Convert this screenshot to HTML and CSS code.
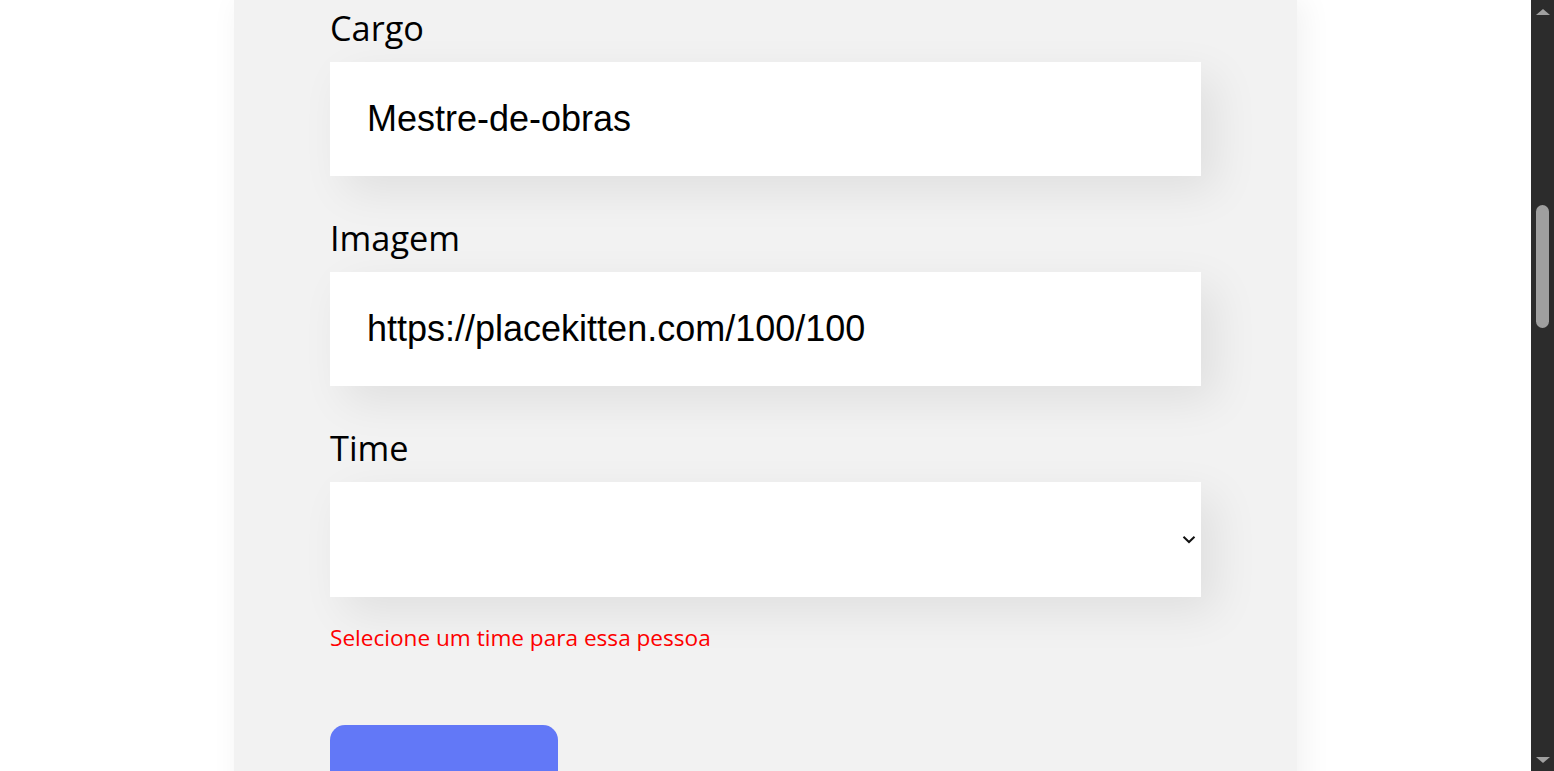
FILE: index.html
```html
<!DOCTYPE html>
<html lang="pt-BR">
<head>
<meta charset="utf-8">
<title>Organo</title>
<link rel="stylesheet" href="styles.css">
</head>
<body>
<div class="screen">
  <main class="page">
    <section class="form-panel">
      <form class="form">
        <div class="field">
          <label class="field-label" for="cargo">Cargo</label>
          <input class="field-input" id="cargo" type="text" value="Mestre-de-obras">
        </div>
        <div class="field">
          <label class="field-label" for="imagem">Imagem</label>
          <input class="field-input" id="imagem" type="text" value="https://placekitten.com/100/100">
        </div>
        <div class="field">
          <label class="field-label" for="time">Time</label>
          <div class="select-wrap">
            <select class="field-select" id="time"><option></option></select>
            <svg class="chevron" width="14" height="9" viewBox="0 0 14 9"><path d="M1.5 1.8 L7 7 L12.5 1.8" fill="none" stroke="#111" stroke-width="2"/></svg>
          </div>
          <p class="field-error">Selecione um time para essa pessoa</p>
        </div>
        <button class="submit" type="button"></button>
      </form>
    </section>
  </main>
  <aside class="scrollbar">
    <div class="sb-arrow sb-up"></div>
    <div class="sb-track"><div class="sb-thumb"></div></div>
    <div class="sb-arrow sb-down"></div>
  </aside>
</div>
</body>
</html>
```
FILE: styles.css
```css
* { box-sizing: border-box; }
html, body { margin: 0; padding: 0; background: #fff; overflow: hidden; }
body { font-family: "Open Sans", "Noto Sans", sans-serif; }

.screen { display: flex; width: 1554px; height: 771px; }
.page { flex: 1; height: 771px; overflow: hidden; background: #fff; }

.form-panel {
  width: 1063px;
  min-height: 900px;
  margin: 0 auto;
  background: #f2f2f2;
  padding: 5px 96px 0 96px;
  box-shadow: 6px 0 30px rgba(0, 0, 0, 0.06);
}

.form { display: flex; flex-direction: column; }

.field { margin-bottom: 39px; }

.field-label {
  display: block;
  font-size: 34.3px;
  line-height: 45px;
  color: #000;
  margin-bottom: 12px;
}

.field-input, .field-select {
  display: block;
  width: 100%;
  height: 114px;
  border: none;
  outline: none;
  background: #fff;
  padding: 0 37px;
  font-family: "Liberation Sans", Arial, sans-serif;
  font-size: 36px;
  color: #000;
  box-shadow: 15px 15px 45px rgba(0, 0, 0, 0.08);
}

.select-wrap { position: relative; }
.field-select { appearance: none; -webkit-appearance: none; border-radius: 0; height: 115px; }
.chevron { position: absolute; right: 5px; top: 53px; }

.field-error {
  margin: 26px 0 0;
  font-size: 22.6px;
  line-height: 30px;
  color: #ff0000;
}

.field:has(.field-error) { margin-bottom: 0; }

.submit {
  margin-top: 72px;
  width: 228px;
  height: 110px;
  border: none;
  border-radius: 15px;
  background: #6278f7;
}

.scrollbar {
  width: 23px;
  height: 771px;
  background: #2c2c2c;
  display: flex;
  flex-direction: column;
  align-items: center;
}
.sb-arrow { width: 0; height: 0; border-left: 7px solid transparent; border-right: 7px solid transparent; }
.sb-up { margin-top: 9px; border-bottom: 6px solid #a0a0a0; }
.sb-down { margin-bottom: 8px; border-top: 6px solid #a0a0a0; }
.sb-track { flex: 1; width: 100%; padding-top: 190px; display: flex; justify-content: center; }
.sb-thumb { width: 13px; height: 123px; border-radius: 7px; background: #9f9f9f; }
```
